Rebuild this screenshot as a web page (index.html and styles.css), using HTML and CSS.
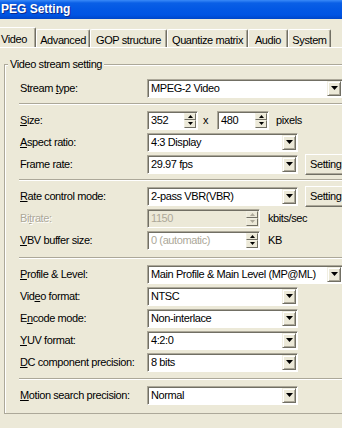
FILE: index.html
```html
<!DOCTYPE html>
<html lang="en">
<head>
  <meta charset="UTF-8">
  <title>MPEG Setting</title>
  <link rel="stylesheet" href="styles.css">
</head>
<body>
  <div class="titlebar"><span class="title">PEG Setting</span></div>

  <div class="tabs">
    <div class="tab active">Video</div>
    <div class="tab tab-adv">Advanced</div>
    <div class="tab tab-gop">GOP structure</div>
    <div class="tab tab-quant">Quantize matrix</div>
    <div class="tab tab-audio">Audio</div>
    <div class="tab tab-system">System</div>
  </div>

  <div class="panel">
    <fieldset class="group">
      <legend>Video stream setting</legend>
      <div class="group-body">

        <div class="row">
          <label class="lbl">Stream <u>t</u>ype:</label>
          <div class="field combo wide">
            <span class="val">MPEG-2 Video</span>
            <span class="drop"><svg width="7" height="4"><polygon points="0,0 7,0 3.5,4" fill="#000"/></svg></span>
          </div>
        </div>

        <div class="sep"></div>

        <div class="row">
          <label class="lbl"><u>S</u>ize:</label>
          <div class="field spin w-size">
            <span class="val">352</span>
            <span class="updown">
              <span class="ud"><svg width="5" height="3"><polygon points="2.5,0 5,3 0,3" fill="#000"/></svg></span>
              <span class="ud"><svg width="5" height="3"><polygon points="0,0 5,0 2.5,3" fill="#000"/></svg></span>
            </span>
          </div>
          <span class="times">x</span>
          <div class="field spin w-size2">
            <span class="val">480</span>
            <span class="updown">
              <span class="ud"><svg width="5" height="3"><polygon points="2.5,0 5,3 0,3" fill="#000"/></svg></span>
              <span class="ud"><svg width="5" height="3"><polygon points="0,0 5,0 2.5,3" fill="#000"/></svg></span>
            </span>
          </div>
          <span class="unit unit-px">pixels</span>
        </div>

        <div class="row">
          <label class="lbl"><u>A</u>spect ratio:</label>
          <div class="field combo">
            <span class="val">4:3 Display</span>
            <span class="drop"><svg width="7" height="4"><polygon points="0,0 7,0 3.5,4" fill="#000"/></svg></span>
          </div>
        </div>

        <div class="row">
          <label class="lbl">Frame rate:</label>
          <div class="field combo">
            <span class="val">29.97 fps</span>
            <span class="drop"><svg width="7" height="4"><polygon points="0,0 7,0 3.5,4" fill="#000"/></svg></span>
          </div>
          <button class="btn">Setting</button>
        </div>

        <div class="sep"></div>

        <div class="row">
          <label class="lbl"><u>R</u>ate control mode:</label>
          <div class="field combo">
            <span class="val">2-pass VBR(VBR)</span>
            <span class="drop"><svg width="7" height="4"><polygon points="0,0 7,0 3.5,4" fill="#000"/></svg></span>
          </div>
          <button class="btn">Setting</button>
        </div>

        <div class="row">
          <label class="lbl disabled">Bi<u>t</u>rate:</label>
          <div class="field spin w-rate off">
            <span class="val">1150</span>
            <span class="updown">
              <span class="ud"><svg width="5" height="3"><polygon points="2.5,0 5,3 0,3" fill="#aca899"/></svg></span>
              <span class="ud"><svg width="5" height="3"><polygon points="0,0 5,0 2.5,3" fill="#aca899"/></svg></span>
            </span>
          </div>
          <span class="unit">kbits/sec</span>
        </div>

        <div class="row">
          <label class="lbl"><u>V</u>BV buffer size:</label>
          <div class="field spin w-rate">
            <span class="val grey">0 (automatic)</span>
            <span class="updown">
              <span class="ud"><svg width="5" height="3"><polygon points="2.5,0 5,3 0,3" fill="#000"/></svg></span>
              <span class="ud"><svg width="5" height="3"><polygon points="0,0 5,0 2.5,3" fill="#000"/></svg></span>
            </span>
          </div>
          <span class="unit">KB</span>
        </div>

        <div class="sep sep-low"></div>

        <div class="row">
          <label class="lbl"><u>P</u>rofile &amp; Level:</label>
          <div class="field combo wide">
            <span class="val">Main Profile &amp; Main Level (MP@ML)</span>
            <span class="drop"><svg width="7" height="4"><polygon points="0,0 7,0 3.5,4" fill="#000"/></svg></span>
          </div>
        </div>

        <div class="row">
          <label class="lbl">Vid<u>e</u>o format:</label>
          <div class="field combo">
            <span class="val">NTSC</span>
            <span class="drop"><svg width="7" height="4"><polygon points="0,0 7,0 3.5,4" fill="#000"/></svg></span>
          </div>
        </div>

        <div class="row">
          <label class="lbl">E<u>n</u>code mode:</label>
          <div class="field combo">
            <span class="val">Non-interlace</span>
            <span class="drop"><svg width="7" height="4"><polygon points="0,0 7,0 3.5,4" fill="#000"/></svg></span>
          </div>
        </div>

        <div class="row">
          <label class="lbl"><u>Y</u>UV format:</label>
          <div class="field combo">
            <span class="val">4:2:0</span>
            <span class="drop"><svg width="7" height="4"><polygon points="0,0 7,0 3.5,4" fill="#000"/></svg></span>
          </div>
        </div>

        <div class="row">
          <label class="lbl"><u>D</u>C component precision:</label>
          <div class="field combo">
            <span class="val">8 bits</span>
            <span class="drop"><svg width="7" height="4"><polygon points="0,0 7,0 3.5,4" fill="#000"/></svg></span>
          </div>
        </div>

        <div class="sep sep-last"></div>

        <div class="row">
          <label class="lbl"><u>M</u>otion search precision:</label>
          <div class="field combo">
            <span class="val">Normal</span>
            <span class="drop"><svg width="7" height="4"><polygon points="0,0 7,0 3.5,4" fill="#000"/></svg></span>
          </div>
        </div>

      </div>
    </fieldset>
  </div>
</body>
</html>
```

FILE: styles.css
```css
html, body {
  margin: 0;
  width: 342px;
  height: 428px;
  overflow: hidden;
}
body {
  font-family: "Liberation Sans", Arial, sans-serif;
  font-size: 11px;
  letter-spacing: -0.4px;
  color: #000;
  background: #ece9d8;
}
.titlebar {
  height: 19px;
  background: linear-gradient(to bottom, #3a8af8 0, #0a5fe6 3px, #0358e4 9px, #0054e3 15px, #0046c8 19px);
  overflow: hidden;
}
.title {
  display: block;
  padding-left: 1px;
  font-size: 12px;
  font-weight: bold;
  letter-spacing: 0;
  line-height: 19px;
  color: #fff;
  text-shadow: 1px 1px #0c2a8c;
}
.tabs {
  display: flex;
  align-items: flex-end;
  height: 28px;
  border-bottom: 1px solid #fff;
  overflow: hidden;
}
.tab {
  box-sizing: border-box;
  height: 18px;
  padding-top: 2px;
  line-height: 16px;
  text-align: center;
  white-space: nowrap;
  background: #ece9d8;
  border: 1px solid #fff;
  border-bottom: 0;
  border-right-color: #716f64;
  border-radius: 2px 2px 0 0;
  box-shadow: inset -1px 0 #aca899;
  flex: none;
}
.tab.active {
  height: 21px;
  width: 44px;
  margin-left: -8px;
  margin-bottom: -1px;
  line-height: 18px;
}
.tab-adv { width: 54px; }
.tab-gop { width: 77px; }
.tab-quant { width: 81px; }
.tab-audio { width: 40px; }
.tab-system { width: 43px; }

.panel {
  padding-top: 10px;
  overflow: hidden;
}
.group {
  margin: 0 -40px 0 4px;
  padding: 0;
  min-width: 0;
  border: 1px solid #aca899;
  box-shadow: inset 1px 1px #fff, 1px 1px #fff;
}
.group legend {
  margin-left: 3px;
  padding: 0 2px;
  line-height: 13px;
  background: #ece9d8;
}
.group-body {
  padding: 6px 0 7px 15px;
}
.row {
  display: flex;
  align-items: center;
  height: 22px;
}
.lbl {
  width: 127px;
  flex: none;
  white-space: nowrap;
}
.lbl.disabled {
  color: #aca899;
  text-shadow: 1px 1px #fff;
}
.sep {
  margin: 4px 0 4px -1px;
  height: 0;
  border-top: 1px solid #aca899;
  border-bottom: 1px solid #fff;
}
.sep.sep-low {
  margin-top: 6px;
}
.sep.sep-last {
  margin-top: 5px;
}

/* sunken edit / combo boxes */
.field {
  box-sizing: border-box;
  height: 19px;
  display: flex;
  align-items: center;
  padding: 1px;
  background: #fff;
  border: 1px solid;
  border-color: #aca899 #fff #fff #aca899;
  box-shadow: inset 1px 1px #716f64;
  flex: none;
}
.field .val {
  flex: 1;
  padding-left: 2px;
  line-height: 15px;
  white-space: nowrap;
  overflow: hidden;
}
.field .val.grey {
  color: #aca899;
}
.field.off {
  background: #ece9d8;
  color: #aca899;
}
.combo { width: 151px; }
.combo.wide { width: 196px; }
.drop {
  box-sizing: border-box;
  width: 14px;
  height: 15px;
  display: flex;
  align-items: center;
  justify-content: center;
  background: #ece9d8;
  border: 1px solid;
  border-color: #f1efe2 #716f64 #716f64 #f1efe2;
  box-shadow: inset 1px 1px #fff, inset -1px -1px #aca899;
}
.drop svg { display: block; }

.w-size { width: 51px; }
.w-size2 { width: 52px; }
.w-rate { width: 113px; }
.updown {
  display: flex;
  flex-direction: column;
  width: 12px;
  height: 15px;
}
.ud {
  box-sizing: border-box;
  flex: 1;
  display: flex;
  align-items: center;
  justify-content: center;
  background: #ece9d8;
  border: 1px solid;
  border-color: #f1efe2 #716f64 #716f64 #f1efe2;
}
.ud svg { display: block; }

.times {
  margin: 0 9px 0 5px;
}
.unit {
  margin-left: 8px;
}
.unit-px {
  margin-left: 7px;
}
.btn {
  box-sizing: border-box;
  height: 21px;
  width: 52px;
  margin-left: 7px;
  padding: 0 0 0 4px;
  flex: none;
  text-align: left;
  font: inherit;
  letter-spacing: inherit;
  color: #000;
  background: #ece9d8;
  border: 1px solid;
  border-color: #fff #716f64 #716f64 #fff;
  box-shadow: inset -1px -1px #aca899;
  white-space: nowrap;
}
```
